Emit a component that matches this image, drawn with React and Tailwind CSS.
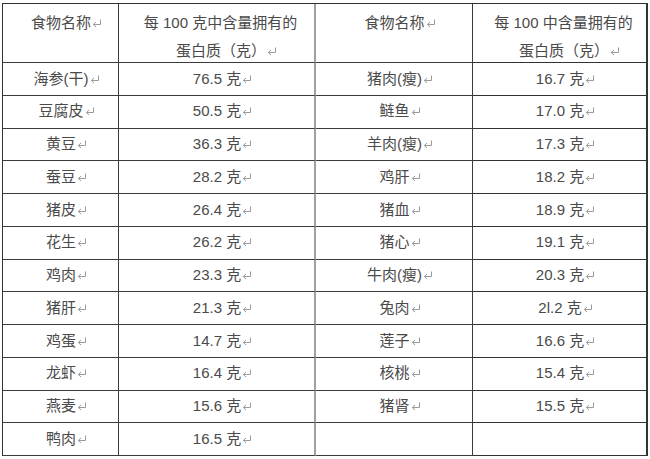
import React from "react";

const left = [
  ["海参(干)", "76.5"],
  ["豆腐皮", "50.5"],
  ["黄豆", "36.3"],
  ["蚕豆", "28.2"],
  ["猪皮", "26.4"],
  ["花生", "26.2"],
  ["鸡肉", "23.3"],
  ["猪肝", "21.3"],
  ["鸡蛋", "14.7"],
  ["龙虾", "16.4"],
  ["燕麦", "15.6"],
  ["鸭肉", "16.5"],
];
const right = [
  ["猪肉(瘦)", "16.7"],
  ["鲢鱼", "17.0"],
  ["羊肉(瘦)", "17.3"],
  ["鸡肝", "18.2"],
  ["猪血", "18.9"],
  ["猪心", "19.1"],
  ["牛肉(瘦)", "20.3"],
  ["兔肉", "2l.2"],
  ["莲子", "16.6"],
  ["核桃", "15.4"],
  ["猪肾", "15.5"],
  null,
];

function Mark() {
  return (
    <svg width="10" height="9" viewBox="0 0 10 9" className="inline-block ml-[1px] align-[0px]">
      <path d="M8.5 0.5 V5.5 H1.5" fill="none" stroke="#9a9a9a" strokeWidth="1" />
      <path d="M4 3 L1.3 5.5 L4 8" fill="none" stroke="#9a9a9a" strokeWidth="1" />
    </svg>
  );
}

const cell = "flex items-center justify-center pl-3 border-b border-r border-[#3a3a3a] whitespace-nowrap";
const cellG = "flex items-center justify-center pl-3 border-b border-r-2 border-b-[#3a3a3a] border-r-[#a0a0a0] whitespace-nowrap";
const cellR = "flex items-center justify-center pl-3 border-b border-r-2 border-[#333] whitespace-nowrap";

export default function App() {
  const rows = [];
  for (let i = 0; i < 12; i++) {
    const l = left[i];
    const r = right[i];
    rows.push(
      <div key={"a" + i} className={cell}>
        <span>{l[0]}<Mark /></span>
      </div>,
      <div key={"b" + i} className={cellG}>
        <span>{l[1]} 克<Mark /></span>
      </div>,
      <div key={"c" + i} className={cell}>
        {r && <span>{r[0]}<Mark /></span>}
      </div>,
      <div key={"d" + i} className={cellR}>
        {r && <span>{r[1]} 克<Mark /></span>}
      </div>
    );
  }
  return (
    <div className="w-[650px] h-[459px] bg-white overflow-hidden pt-[3px] pl-[2px]">
      <div
        className="grid grid-cols-[116px_197px_157px_175px] grid-rows-[59px_repeat(12,32.75px)] w-[646px] border-l border-t border-[#333] text-[15px] text-[#4a4a4a]"
        style={{ fontFamily: '"Liberation Sans", "Noto Sans CJK SC", sans-serif' }}
      >
        <div className="text-center pl-3 pt-[5px] leading-[28px] border-b border-r border-[#3a3a3a] whitespace-nowrap">
          食物名称<Mark />
        </div>
        <div className="flex flex-col items-center pl-2 pt-[5px] leading-[28px] border-b border-r-2 border-b-[#3a3a3a] border-r-[#a0a0a0] whitespace-nowrap">
          <span>每 100 克中含量拥有的</span>
          <span className="pl-3">蛋白质（克）<Mark /></span>
        </div>
        <div className="text-center pl-3 pt-[5px] leading-[28px] border-b border-r border-[#3a3a3a] whitespace-nowrap">
          食物名称<Mark />
        </div>
        <div className="flex flex-col items-center pl-2 pt-[5px] leading-[28px] border-b border-r-2 border-[#333] whitespace-nowrap">
          <span>每 100 中含量拥有的</span>
          <span className="pl-3">蛋白质（克）<Mark /></span>
        </div>
        {rows}
      </div>
    </div>
  );
}
